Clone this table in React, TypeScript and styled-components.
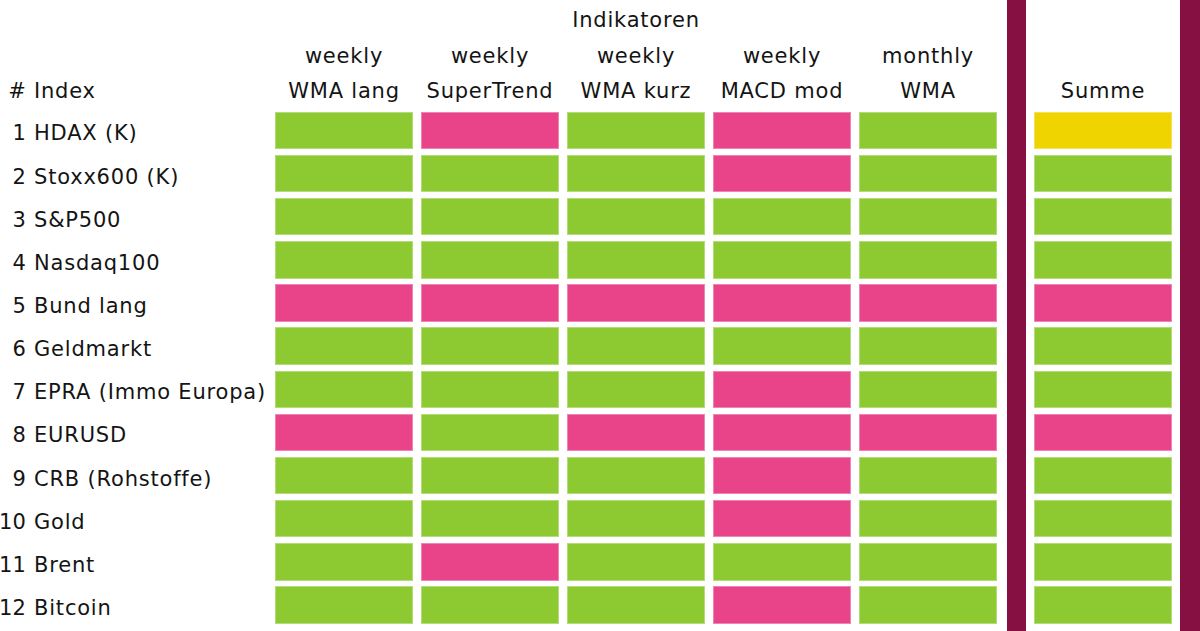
import styled, { createGlobalStyle } from 'styled-components';

type Signal = 'g' | 'p' | 'y';

const COLORS: Record<Signal, string> = {
  g: '#8dca31',
  p: '#e9438a',
  y: '#efd400',
};

const INDICATORS = [
  ['weekly', 'WMA lang'],
  ['weekly', 'SuperTrend'],
  ['weekly', 'WMA kurz'],
  ['weekly', 'MACD mod'],
  ['monthly', 'WMA'],
];

const ROWS: { name: string; signals: Signal[]; sum: Signal }[] = [
  { name: 'HDAX (K)', signals: ['g', 'p', 'g', 'p', 'g'], sum: 'y' },
  { name: 'Stoxx600 (K)', signals: ['g', 'g', 'g', 'p', 'g'], sum: 'g' },
  { name: 'S&P500', signals: ['g', 'g', 'g', 'g', 'g'], sum: 'g' },
  { name: 'Nasdaq100', signals: ['g', 'g', 'g', 'g', 'g'], sum: 'g' },
  { name: 'Bund lang', signals: ['p', 'p', 'p', 'p', 'p'], sum: 'p' },
  { name: 'Geldmarkt', signals: ['g', 'g', 'g', 'g', 'g'], sum: 'g' },
  { name: 'EPRA (Immo Europa)', signals: ['g', 'g', 'g', 'p', 'g'], sum: 'g' },
  { name: 'EURUSD', signals: ['p', 'g', 'p', 'p', 'p'], sum: 'p' },
  { name: 'CRB (Rohstoffe)', signals: ['g', 'g', 'g', 'p', 'g'], sum: 'g' },
  { name: 'Gold', signals: ['g', 'g', 'g', 'p', 'g'], sum: 'g' },
  { name: 'Brent', signals: ['g', 'p', 'g', 'g', 'g'], sum: 'g' },
  { name: 'Bitcoin', signals: ['g', 'g', 'g', 'p', 'g'], sum: 'g' },
];

const GlobalStyle = createGlobalStyle`
  html, body {
    margin: 0;
    padding: 0;
    background: #ffffff;
  }

  body {
    font-family: 'DejaVu Sans', 'Liberation Sans', sans-serif;
    color: #141414;
  }
`;

const App = () => {
  return (
    <>
      <GlobalStyle />
      <Board>
        <Title>Indikatoren</Title>
        <IndexHead>
          <Num>#</Num>
          <Name>Index</Name>
        </IndexHead>
        {INDICATORS.map(([period, label], i) => (
          <ColumnHead key={label} $col={i + 3}>
            <span>{period}</span>
            <span>{label}</span>
          </ColumnHead>
        ))}
        <ColumnHead $col={9}>
          <span>&nbsp;</span>
          <span>Summe</span>
        </ColumnHead>

        {ROWS.map((row, r) => (
          <Row key={row.name} $row={r + 3}>
            <Num>{r + 1}</Num>
            <Name>{row.name}</Name>
            {row.signals.map((s, i) => (
              <Cell key={i} $color={COLORS[s]} />
            ))}
            <Spacer />
            <Cell $color={COLORS[row.sum]} />
          </Row>
        ))}

        <Divider $col={8} $width={19} />
        <Divider $col={10} $width={20} />
      </Board>
    </>
  );
};

const Board = styled.div`
  display: grid;
  grid-template-columns: 26px 233px repeat(5, 138px) 21px 138px 20px;
  grid-template-rows: 38px 62.4px repeat(12, 37.5px) 1fr;
  column-gap: 8px;
  row-gap: 5.65px;
  width: 1200px;
  height: 100vh;
  font-size: 21px;
  letter-spacing: 0.8px;
`;

const Title = styled.div`
  grid-row: 1;
  grid-column: 5;
  display: flex;
  align-items: center;
  justify-content: center;
  padding-top: 2px;
  white-space: nowrap;
`;

const IndexHead = styled.div`
  grid-row: 2;
  grid-column: 1 / 3;
  display: grid;
  grid-template-columns: 26px 1fr;
  column-gap: 8px;
  align-self: end;
  line-height: 35px;
  margin-bottom: -3px;
`;

const ColumnHead = styled.div<{ $col: number }>`
  grid-row: 2;
  grid-column: ${({ $col }) => $col};
  display: flex;
  flex-direction: column;
  align-items: center;
  align-self: end;
  line-height: 35px;
  margin-bottom: -3px;
  white-space: nowrap;
`;

const Row = styled.div<{ $row: number }>`
  grid-row: ${({ $row }) => $row};
  grid-column: 1 / -1;
  display: grid;
  grid-template-columns: subgrid;
  align-items: stretch;
`;

const Num = styled.span`
  display: flex;
  align-items: center;
  justify-content: flex-end;
  padding-top: 6px;
  letter-spacing: 0.2px;
`;

const Name = styled.span`
  display: flex;
  align-items: center;
  padding-top: 6px;
  white-space: nowrap;
`;

const Cell = styled.div<{ $color: string }>`
  background: ${({ $color }) => $color};
  box-shadow: inset 0 0 0 1px rgba(255, 255, 255, 0.35);
`;

const Spacer = styled.div``;

const Divider = styled.div<{ $col: number; $width: number }>`
  grid-row: 1 / -1;
  grid-column: ${({ $col }) => $col};
  justify-self: end;
  width: ${({ $width }) => $width}px;
  background: #861042;
`;

export default App;
